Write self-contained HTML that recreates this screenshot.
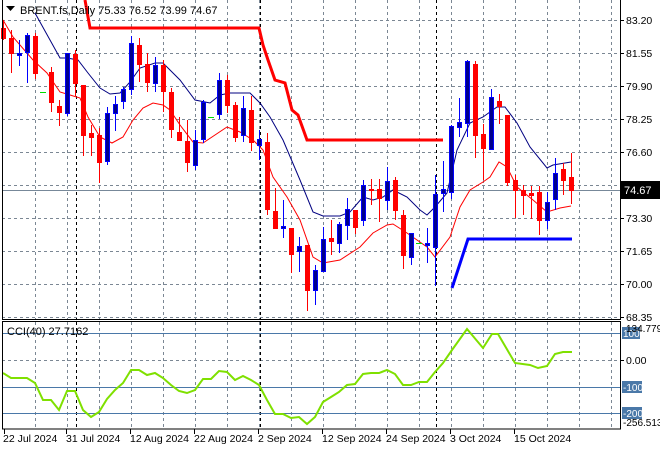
<!DOCTYPE html>
<html><head><meta charset="utf-8"><style>
html,body{margin:0;padding:0;background:#fff;}
svg{display:block;font-family:"Liberation Sans",sans-serif;font-size:11px;}
</style></head><body>
<svg width="660" height="450" viewBox="0 0 660 450" xmlns="http://www.w3.org/2000/svg">
<rect width="660" height="450" fill="#fff"/>
<g stroke="#7b8794" stroke-dasharray="3,3" stroke-width="1" shape-rendering="crispEdges">
<path d="M2 20.5H620M2 53.5H620M2 86.5H620M2 119.5H620M2 152.5H620M2 185.5H620M2 218.5H620M2 251.5H620M2 284.5H620M2 317.5H620"/>
<path d="M35.5 0V319M67.5 0V319M99.5 0V319M131.5 0V319M163.5 0V319M195.5 0V319M227.5 0V319M259.5 0V319M291.5 0V319M323.5 0V319M355.5 0V319M387.5 0V319M419.5 0V319M451.5 0V319M483.5 0V319M515.5 0V319M547.5 0V319M579.5 0V319M611.5 0V319"/>
<path d="M35.5 322V429M67.5 322V429M99.5 322V429M131.5 322V429M163.5 322V429M195.5 322V429M227.5 322V429M259.5 322V429M291.5 322V429M323.5 322V429M355.5 322V429M387.5 322V429M419.5 322V429M451.5 322V429M483.5 322V429M515.5 322V429M547.5 322V429M579.5 322V429M611.5 322V429"/>
<path d="M2 360.5H620"/>
</g>
<g stroke="#000" stroke-dasharray="3,3" shape-rendering="crispEdges">
<path d="M76.5 0V319M260.5 0V319M436.5 0V319M76.5 322V429M260.5 322V429M436.5 322V429"/>
</g>
<g stroke="#4a78a8" shape-rendering="crispEdges">
<path d="M2 333.5H620M2 387.5H620M2 413.5H620"/>
</g>
<path d="M2 190.5H620" stroke="#778899" shape-rendering="crispEdges"/>
<!-- MA lines -->
<polyline fill="none" stroke="#000080" stroke-width="1" points="35,13 50,40 60,58 67,58 78,60 88,73 100,88 110,94 120,93 130,82 140,68 155,63 163,63 180,80 195,100 210,103 220,95 230,93 250,93 260,103 270,117 283,140 300,180 313,212 323,216 340,216 350,212 363,197 373,200 383,197 393,190 407,197 420,210 427,215 435,207 447,193 457,150 470,123 483,117 497,107 505,107 517,123 530,147 547,168 553,165 571,162"/>
<polyline fill="none" stroke="#ff0000" stroke-width="1" points="3,20 13,37 33,60 47,73 60,92 70,95 80,98 88,117 100,137 112,143 123,137 133,120 143,108 153,103 163,105 170,110 180,125 193,142 203,143 227,127 240,132 253,140 263,150 273,177 287,197 300,220 313,257 323,263 340,260 360,247 373,233 387,225 393,224 407,233 427,247 435,257 450,237 460,207 470,190 483,182 490,177 499,162 507,167 517,187 533,200 547,212 560,208 571,206"/>
<polyline fill="none" stroke="#ff0000" stroke-width="3" points="85,0 90,28 259,28 263,45 268,60 275,80 285,83 292,110 298,115 307,140 443,140"/>
<polyline fill="none" stroke="#0000ff" stroke-width="3" points="452,288 468,239 572,239"/>
<!-- red candles -->
<g shape-rendering="crispEdges">
<path stroke="#ff0000" fill="none" d="M3.5 20V40M11.5 30V73M35.5 33V79M51.5 67V112M59.5 100V126M75.5 50V96M83.5 85V156M91.5 125V156M99.5 128V183M139.5 38V82M147.5 53V92M163.5 60V112M171.5 88V138M179.5 117V141M187.5 120V172M227.5 75V113M235.5 102V142M251.5 96V151M267.5 133V215M275.5 188V229M291.5 228V273M307.5 245V311M331.5 220V255M355.5 210V234M371.5 179V205M379.5 179V222M395.5 177V220M403.5 210V269M475.5 61V158M483.5 124V180M499.5 94V124M507.5 115V186M515.5 175V218M523.5 185V215M531.5 186V219M539.5 186V235M563.5 163V195M571.5 153V204"/>
<g fill="#ff0000">
<rect x="1" y="28" width="5" height="11"/>
<rect x="9" y="38" width="5" height="16"/>
<rect x="33" y="36" width="5" height="38"/>
<rect x="49" y="72" width="5" height="31"/>
<rect x="57" y="106" width="5" height="7"/>
<rect x="73" y="54" width="5" height="30"/>
<rect x="81" y="85" width="5" height="51"/>
<rect x="89" y="133" width="5" height="5"/>
<rect x="97" y="135" width="5" height="28"/>
<rect x="137" y="45" width="5" height="20"/>
<rect x="145" y="64" width="5" height="19"/>
<rect x="161" y="65" width="5" height="27"/>
<rect x="169" y="92" width="5" height="38"/>
<rect x="177" y="132" width="5" height="9"/>
<rect x="185" y="141" width="5" height="22"/>
<rect x="225" y="80" width="5" height="26"/>
<rect x="233" y="105" width="5" height="33"/>
<rect x="249" y="110" width="5" height="33"/>
<rect x="265" y="142" width="5" height="68"/>
<rect x="273" y="211" width="5" height="18"/>
<rect x="289" y="228" width="5" height="27"/>
<rect x="305" y="245" width="5" height="46"/>
<rect x="329" y="238" width="5" height="4"/>
<rect x="353" y="210" width="5" height="18"/>
<rect x="369" y="189" width="5" height="2"/>
<rect x="377" y="189" width="5" height="10"/>
<rect x="393" y="180" width="5" height="31"/>
<rect x="401" y="215" width="5" height="41"/>
<rect x="473" y="64" width="5" height="72"/>
<rect x="481" y="134" width="5" height="15"/>
<rect x="497" y="101" width="5" height="6"/>
<rect x="505" y="115" width="5" height="68"/>
<rect x="513" y="180" width="5" height="11"/>
<rect x="521" y="190" width="5" height="6"/>
<rect x="529" y="193" width="5" height="3"/>
<rect x="537" y="192" width="5" height="29"/>
<rect x="561" y="169" width="5" height="12"/>
<rect x="569" y="177" width="5" height="14"/>
</g>
<!-- blue candles -->
<path stroke="#0000ff" fill="none" d="M19.5 40V66M27.5 33V83M67.5 53V116M107.5 107V165M115.5 96V131M123.5 87V109M131.5 36V95M155.5 57V92M195.5 130V170M203.5 100V143M219.5 73V119M243.5 96V142M259.5 130V160M283.5 200V238M299.5 237V272M315.5 265V305M323.5 227V272M339.5 222V253M347.5 198V240M363.5 180V226M387.5 167V210M411.5 233V265M427.5 228V263M435.5 175V286M443.5 161V212M451.5 125V199M459.5 98V137M467.5 60V137M491.5 89V150M547.5 192V229M555.5 158V210"/>
<g fill="#00008c" stroke="#0000ff">
<rect x="17.5" y="53.5" width="4" height="2"/>
<rect x="25.5" y="35.5" width="4" height="17"/>
<rect x="65.5" y="53.5" width="4" height="60"/>
<rect x="105.5" y="113.5" width="4" height="48"/>
<rect x="113.5" y="104.5" width="4" height="9"/>
<rect x="121.5" y="89.5" width="4" height="12"/>
<rect x="129.5" y="43.5" width="4" height="46"/>
<rect x="153.5" y="65.5" width="4" height="18"/>
<rect x="193.5" y="140.5" width="4" height="25"/>
<rect x="201.5" y="102.5" width="4" height="37"/>
<rect x="217.5" y="80.5" width="4" height="34"/>
<rect x="241.5" y="108.5" width="4" height="27"/>
<rect x="257.5" y="139.5" width="4" height="6"/>
<rect x="281.5" y="226.5" width="4" height="2"/>
<rect x="297.5" y="246.5" width="4" height="5"/>
<rect x="313.5" y="270.5" width="4" height="20"/>
<rect x="321.5" y="239.5" width="4" height="32"/>
<rect x="337.5" y="224.5" width="4" height="19"/>
<rect x="345.5" y="209.5" width="4" height="16"/>
<rect x="361.5" y="185.5" width="4" height="35"/>
<rect x="385.5" y="181.5" width="4" height="19"/>
<rect x="409.5" y="233.5" width="4" height="24"/>
<rect x="425.5" y="243.5" width="4" height="2"/>
<rect x="433.5" y="194.5" width="4" height="53"/>
<rect x="441.5" y="189.5" width="4" height="4"/>
<rect x="449.5" y="126.5" width="4" height="66"/>
<rect x="457.5" y="122.5" width="4" height="5"/>
<rect x="465.5" y="61.5" width="4" height="62"/>
<rect x="489.5" y="97.5" width="4" height="52"/>
<rect x="545.5" y="202.5" width="4" height="18"/>
<rect x="553.5" y="173.5" width="4" height="26"/>
</g>
<g fill="#00dd00">
<rect x="40" y="92" width="6" height="1"/>
<rect x="208" y="117" width="6" height="1"/>
<rect x="416" y="243" width="6" height="1"/>
</g>
</g>
<!-- CCI -->
<polyline fill="none" stroke="#7fe000" stroke-width="2" points="3,373 11,378 27,378 35,383 43,400 51,400 59,410 67,391 75,391 83,410 91,417 99,412 107,399 115,390 123,383 131,370 139,370 147,375 155,373 163,378 171,385 179,391 187,393 195,390 203,379 211,379 219,371 227,372 235,380 243,376 251,380 259,385 267,400 275,414 283,414 291,418 299,417 307,424 315,417 323,402 331,397 339,392 347,385 355,384 363,374 371,373 379,373 387,370 395,374 403,385 411,385 419,382 427,382 435,372 443,363 452,350 467,329 483,348 492,334 498,334 515,363 530,365 538,368 547,366 555,354 563,352 572,352"/>
<!-- frames -->
<g fill="none" stroke="#000" shape-rendering="crispEdges">
<path d="M2.5 0V319.5H620.5V0"/>
<rect x="2.5" y="321.5" width="618" height="107.5"/>
<path d="M4.5 429V434M66.5 429V434M130.5 429V434M194.5 429V434M258.5 429V434M322.5 429V434M386.5 429V434M450.5 429V434M514.5 429V434"/>
<path d="M620 20.5H624M620 53.5H624M620 86.5H624M620 119.5H624M620 152.5H624M620 185.5H624M620 218.5H624M620 251.5H624M620 284.5H624M620 317.5H624M620 360.5H624"/>
</g>
<g fill="#000">
<path d="M6 6h9l-4.5 5z"/>
<text x="20" y="14">BRENT.fs,Daily  75.33 76.52 73.99 74.67</text>
<text x="7" y="335">CCI(40) 27.7162</text>
<g font-size="10.5">
<text x="626" y="24">83.20</text>
<text x="626" y="57">81.55</text>
<text x="626" y="90">79.90</text>
<text x="626" y="123">78.25</text>
<text x="626" y="156">76.60</text>
<text x="626" y="189">74.95</text>
<text x="626" y="222">73.30</text>
<text x="626" y="255">71.65</text>
<text x="626" y="288">70.00</text>
<text x="626" y="321">68.35</text>
<text x="626" y="364">0.00</text>
</g>
</g>
<rect x="621" y="181" width="39" height="18" fill="#000"/>
<text x="624" y="194" fill="#fff" font-size="11">74.67</text>
<rect x="622" y="327" width="18" height="12" fill="#4a78a8"/>
<text x="623" y="337" fill="#fff" font-size="10">100</text>
<text x="626" y="332" fill="#000" font-size="10">134.779</text>
<rect x="622" y="381" width="20" height="12" fill="#4a78a8"/>
<text x="623" y="391" fill="#fff" font-size="10">-100</text>
<rect x="622" y="407" width="20" height="12" fill="#4a78a8"/>
<text x="623" y="417" fill="#fff" font-size="10">-200</text>
<text x="623" y="426" fill="#000" font-size="10">-256.513</text>
<g fill="#000" font-size="10.5">
<text x="3" y="442">22 Jul 2024</text>
<text x="66" y="442">31 Jul 2024</text>
<text x="130" y="442">12 Aug 2024</text>
<text x="194" y="442">22 Aug 2024</text>
<text x="258" y="442">2 Sep 2024</text>
<text x="322" y="442">12 Sep 2024</text>
<text x="386" y="442">24 Sep 2024</text>
<text x="450" y="442">3 Oct 2024</text>
<text x="514" y="442">15 Oct 2024</text>
</g>
</svg>
</body></html>
